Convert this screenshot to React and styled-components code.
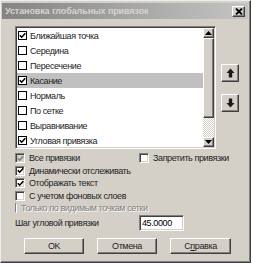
import styled, { createGlobalStyle, css } from "styled-components";

const GlobalStyle = createGlobalStyle`
  html, body {
    margin: 0;
    padding: 0;
    background: #ffffff;
  }
  body {
    font-family: "Liberation Sans", Arial, sans-serif;
    font-size: 9px;
    letter-spacing: -0.4px;
    color: #1e1e1e;
  }
`;

const snaps = [
  { label: "Ближайшая точка", checked: true },
  { label: "Середина", checked: false },
  { label: "Пересечение", checked: false },
  { label: "Касание", checked: true, selected: true },
  { label: "Нормаль", checked: false },
  { label: "По сетке", checked: false },
  { label: "Выравнивание", checked: false },
  { label: "Угловая привязка", checked: true },
];

const CheckMark = ({ color = "#000" }) => (
  <svg width="7" height="7" viewBox="0 0 7 7">
    <path d="M0.8 3.2 L2.7 5.2 L6.3 1.3" fill="none" stroke={color} strokeWidth="1.6" />
  </svg>
);

const Arrow = ({ down }) => (
  <svg width="9" height="10" viewBox="0 0 9 10" style={down ? { transform: "rotate(180deg)" } : undefined}>
    <path d="M4.5 0.5 L8.5 5 H6.2 V9.5 H2.8 V5 H0.5 Z" fill="#1a1a1a" />
  </svg>
);

const SmallTriangle = ({ down }) => (
  <svg width="7" height="4" viewBox="0 0 7 4">
    <path d={down ? "M0 0 H7 L3.5 4 Z" : "M0 4 H7 L3.5 0 Z"} fill="#000" />
  </svg>
);

export default function App() {
  return (
    <>
      <GlobalStyle />
      <Dialog>
        <TitleBar>
          <Title>Установка глобальных привязок</Title>
          <CloseButton>
            <svg width="8" height="7" viewBox="0 0 8 7">
              <path d="M1 0.5 L7 6.5 M7 0.5 L1 6.5" stroke="#000" strokeWidth="1.8" />
            </svg>
          </CloseButton>
        </TitleBar>

        <Content>
          <ListRow>
            <ListBox>
              <Items>
                {snaps.map((s) => (
                  <Item key={s.label} $selected={s.selected}>
                    <ListCheck>{s.checked && <CheckMark />}</ListCheck>
                    {s.label}
                  </Item>
                ))}
              </Items>
              <ScrollBar>
                <ScrollButton>
                  <SmallTriangle />
                </ScrollButton>
                <Thumb />
                <Track />
                <ScrollButton>
                  <SmallTriangle down />
                </ScrollButton>
              </ScrollBar>
            </ListBox>
            <SideButtons>
              <MoveButton>
                <Arrow />
              </MoveButton>
              <MoveButton>
                <Arrow down />
              </MoveButton>
            </SideButtons>
          </ListRow>

          <Options>
            <OptionLine>
              <Option>
                <Box $disabled>
                  <CheckMark color="#808080" />
                </Box>
                Все привязки
              </Option>
              <Option>
                <Box />
                Запретить привязки
              </Option>
            </OptionLine>
            <OptionLine>
              <Option>
                <Box>
                  <CheckMark />
                </Box>
                Динамически отслеживать
              </Option>
            </OptionLine>
            <OptionLine>
              <Option>
                <Box>
                  <CheckMark />
                </Box>
                Отображать текст
              </Option>
            </OptionLine>
            <OptionLine>
              <Option>
                <Box />С учетом фоновых слоев
              </Option>
            </OptionLine>
            <OptionLine>
              <Option $disabled>
                <Box $disabled />
                Только по видимым точкам сетки
              </Option>
            </OptionLine>
          </Options>

          <StepRow>
            <span>Шаг угловой привязки</span>
            <Input defaultValue="45.0000" />
          </StepRow>

          <Buttons>
            <Button>OK</Button>
            <Button>Отмена</Button>
            <Button $wide>
              С<u>п</u>равка
            </Button>
          </Buttons>
        </Content>
      </Dialog>
    </>
  );
}

const raised = css`
  background: #d4d0c8;
  border-top: 1px solid #ffffff;
  border-left: 1px solid #ffffff;
  border-right: 1px solid #404040;
  border-bottom: 1px solid #404040;
  box-shadow: inset -1px -1px 0 #808080;
`;

const sunken = css`
  border-top: 1px solid #808080;
  border-left: 1px solid #808080;
  border-right: 1px solid #ffffff;
  border-bottom: 1px solid #ffffff;
  box-shadow: inset 1px 1px 0 #404040, inset -1px -1px 0 #d4d0c8;
`;

const Dialog = styled.div`
  width: 251px;
  height: 263px;
  box-sizing: border-box;
  background: #d4d0c8;
  border-top: 1px solid #eeeeee;
  border-left: 1px solid #eeeeee;
  border-right: 1px solid #404040;
  border-bottom: 1px solid #404040;
  box-shadow: inset -1px -1px 0 #808080;
  padding: 2px 2px 0 1px;
  display: flex;
  flex-direction: column;
`;

const TitleBar = styled.div`
  height: 16px;
  display: flex;
  align-items: center;
  justify-content: space-between;
  padding: 0 3px 0 3px;
  background: linear-gradient(to right, #848484, #c4c4c4);
`;

const Title = styled.div`
  font-weight: bold;
  font-size: 9px;
  letter-spacing: -0.1px;
  color: #d8d4cc;
  white-space: nowrap;
`;

const CloseButton = styled.div`
  ${raised};
  width: 11px;
  height: 9px;
  display: flex;
  align-items: center;
  justify-content: center;
`;

const Content = styled.div`
  padding: 7px 0 0 13px;
  display: flex;
  flex-direction: column;
`;

const ListRow = styled.div`
  display: flex;
  align-items: flex-start;
`;

const ListBox = styled.div`
  ${sunken};
  width: 201px;
  height: 123px;
  box-sizing: border-box;
  padding: 1px;
  background: #ffffff;
  display: flex;
`;

const Items = styled.div`
  flex: 1;
  overflow: hidden;
`;

const Item = styled.div`
  height: 15px;
  display: flex;
  align-items: center;
  gap: 3px;
  padding-left: 1px;
  background: ${(p) => (p.$selected ? "#c0c0c0" : "transparent")};
  white-space: nowrap;
`;

const ListCheck = styled.div`
  width: 9px;
  height: 9px;
  box-sizing: border-box;
  border: 1px solid #000;
  background: #fff;
  display: flex;
  align-items: center;
  justify-content: center;
`;

const ScrollBar = styled.div`
  width: 11px;
  display: flex;
  flex-direction: column;
`;

const ScrollButton = styled.div`
  ${raised};
  height: 10px;
  box-sizing: border-box;
  display: flex;
  align-items: center;
  justify-content: center;
`;

const Thumb = styled.div`
  ${raised};
  height: 80px;
  box-sizing: border-box;
`;

const Track = styled.div`
  flex: 1;
  background-color: #eae8e4;
  background-image: repeating-conic-gradient(#d4d0c8 0 25%, #ffffff 0 50%);
  background-size: 2px 2px;
`;

const SideButtons = styled.div`
  display: flex;
  flex-direction: column;
  gap: 12px;
  margin: 38px 0 0 5px;
`;

const MoveButton = styled.div`
  ${raised};
  width: 18px;
  height: 18px;
  box-sizing: border-box;
  display: flex;
  align-items: center;
  justify-content: center;
`;

const Options = styled.div`
  margin-top: 3px;
  display: flex;
  flex-direction: column;
`;

const OptionLine = styled.div`
  height: 12.5px;
  display: grid;
  grid-template-columns: 124px auto;
  align-items: center;
`;

const Option = styled.div`
  display: flex;
  align-items: center;
  gap: 4px;
  white-space: nowrap;
  ${(p) =>
    p.$disabled &&
    css`
      color: #808080;
      text-shadow: 1px 1px 0 #ffffff;
    `}
`;

const Box = styled.div`
  ${sunken};
  width: 10px;
  height: 10px;
  box-sizing: border-box;
  background: ${(p) => (p.$disabled ? "#d4d0c8" : "#ffffff")};
  display: flex;
  align-items: center;
  justify-content: center;
`;

const StepRow = styled.div`
  display: flex;
  align-items: center;
  justify-content: space-between;
  width: 169px;
  height: 16px;
`;

const Input = styled.input`
  ${sunken};
  width: 45px;
  height: 16px;
  box-sizing: border-box;
  padding: 0 2px;
  font-family: "Liberation Sans", Arial, sans-serif;
  font-size: 9px;
  letter-spacing: -0.4px;
  color: #000;
  background: #ffffff;
  outline: none;
`;

const Buttons = styled.div`
  display: flex;
  gap: 13px;
  margin: 7px 0 0 9px;
`;

const Button = styled.div`
  ${raised};
  width: ${(p) => (p.$wide ? "61px" : "60px")};
  height: 16px;
  box-sizing: border-box;
  display: flex;
  align-items: center;
  justify-content: center;
  font-size: 9px;
`;
